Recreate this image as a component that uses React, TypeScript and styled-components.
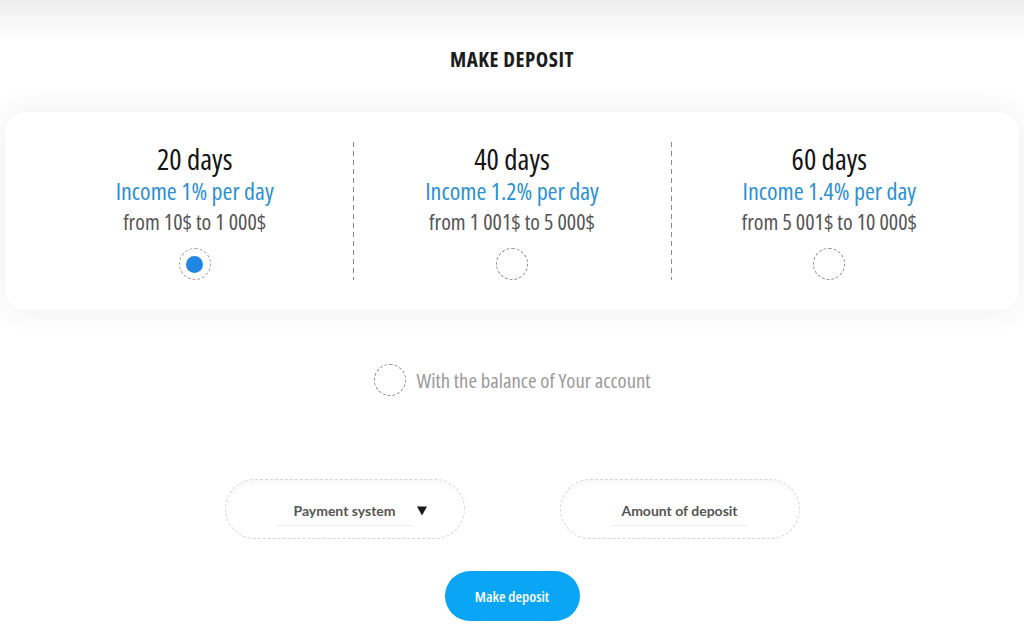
import React, { useState } from "react";
import styled, { createGlobalStyle } from "styled-components";

const Global = createGlobalStyle`
  html, body { margin: 0; padding: 0; background: #ffffff; }
  body { font-family: "Open Sans", "DejaVu Sans Condensed", sans-serif; }
  * { box-sizing: border-box; }
`;

const narrow = `"Open Sans", "DejaVu Sans Condensed", sans-serif`;

const Page = styled.div`
  width: 1024px;
  height: 642px;
  overflow: hidden;
  display: flex;
  flex-direction: column;
  align-items: center;
  background: linear-gradient(#ececec 0px, #f6f6f6 18px, #ffffff 42px);
`;

const Title = styled.h1`
  margin: 48px 0 0;
  height: 22px;
  line-height: 22px;
  font-family: ${narrow};
  font-stretch: 75%;
  font-weight: 700;
  font-size: 21px;
  letter-spacing: 0.5px;
  color: #1d1d1d;
`;

const Card = styled.div`
  margin-top: 42px;
  width: 1014px;
  height: 198px;
  padding: 30px 31px;
  background: #fff;
  border-radius: 20px;
  box-shadow: 0 0 32px rgba(0, 0, 0, 0.075);
  display: grid;
  grid-template-columns: repeat(3, 1fr);
`;

const Plan = styled.div<{ $divider?: boolean }>`
  display: flex;
  flex-direction: column;
  align-items: center;
  background: ${(p) =>
    p.$divider
      ? "linear-gradient(#8a8a8a 55%, transparent 0) left top / 1px 9px repeat-y"
      : "none"};
`;

const Days = styled.div`
  font-family: ${narrow};
  font-stretch: 75%;
  font-weight: 500;
  font-size: 29px;
  line-height: 33px;
  color: #151515;
`;

const Income = styled.div`
  font-family: ${narrow};
  font-stretch: 75%;
  font-weight: 500;
  font-size: 24px;
  line-height: 32px;
  color: #2b90d5;
`;

const Range = styled.div`
  font-family: ${narrow};
  font-stretch: 75%;
  font-size: 22px;
  line-height: 29px;
  color: #555;
`;

const Radio = styled.button<{ $checked?: boolean }>`
  width: 32px;
  height: 32px;
  padding: 0;
  border-radius: 50%;
  border: 1px dashed ${(p) => (p.$checked ? "#b79a9a" : "#8f8f8f")};
  background: #fff;
  display: flex;
  align-items: center;
  justify-content: center;
  cursor: pointer;
  flex-shrink: 0;
  &::after {
    content: "";
    width: 17px;
    height: 17px;
    border-radius: 50%;
    background: ${(p) => (p.$checked ? "#1f86e3" : "transparent")};
  }
`;

const PlanRadio = styled(Radio)`
  margin-top: 12px;
`;

const BalanceRow = styled.label`
  margin-top: 54px;
  display: flex;
  align-items: center;
  gap: 10px;
  cursor: pointer;
  margin-left: 1px;
`;

const BalanceText = styled.span`
  font-family: ${narrow};
  font-stretch: 75%;
  font-weight: 500;
  font-size: 20.7px;
  color: #9a9a9a;
`;

const Fields = styled.div`
  margin-top: 83px;
  display: flex;
  gap: 95px;
`;

const Pill = styled.div`
  width: 240px;
  height: 60px;
  border-radius: 30px;
  border: 1px dashed #d6d6d6;
  box-shadow: inset 0 6px 10px -6px rgba(0, 0, 0, 0.06);
  display: flex;
  align-items: center;
  justify-content: center;
`;

const Field = styled.div`
  position: relative;
  width: 135px;
  height: 30px;
  margin-top: 4px;
  border-bottom: 1px solid #ececec;
  display: flex;
  align-items: center;
  justify-content: center;
  font-family: Lato, "Open Sans", sans-serif;
  font-weight: 700;
  font-size: 14px;
  color: #555;
`;

const Arrow = styled.span`
  position: absolute;
  left: 140px;
  top: 50%;
  transform: translateY(-50%);
  width: 0;
  height: 0;
  border-left: 5px solid transparent;
  border-right: 5px solid transparent;
  border-top: 9px solid #1a1a1a;
`;

const SubmitButton = styled.button`
  margin-top: 32px;
  width: 135px;
  height: 50px;
  border: none;
  border-radius: 25px;
  background: #0aa5f5;
  color: #fff;
  font-family: ${narrow};
  font-stretch: 75%;
  font-weight: 600;
  font-size: 15px;
  cursor: pointer;
`;

const plans = [
  { days: "20 days", income: "Income 1% per day", range: "from 10$ to 1 000$" },
  { days: "40 days", income: "Income 1.2% per day", range: "from 1 001$ to 5 000$" },
  { days: "60 days", income: "Income 1.4% per day", range: "from 5 001$ to 10 000$" },
];

export default function App() {
  const [selected, setSelected] = useState(0);
  const [balance, setBalance] = useState(false);
  return (
    <>
      <Global />
      <Page>
        <Title>MAKE DEPOSIT</Title>
        <Card>
          {plans.map((p, i) => (
            <Plan key={p.days} $divider={i > 0}>
              <Days>{p.days}</Days>
              <Income>{p.income}</Income>
              <Range>{p.range}</Range>
              <PlanRadio
                type="button"
                aria-label={p.days}
                $checked={selected === i}
                onClick={() => setSelected(i)}
              />
            </Plan>
          ))}
        </Card>
        <BalanceRow onClick={() => setBalance(!balance)}>
          <Radio type="button" aria-label="balance" $checked={balance} />
          <BalanceText>With the balance of Your account</BalanceText>
        </BalanceRow>
        <Fields>
          <Pill>
            <Field>
              Payment system
              <Arrow />
            </Field>
          </Pill>
          <Pill>
            <Field>Amount of deposit</Field>
          </Pill>
        </Fields>
        <SubmitButton type="button">Make deposit</SubmitButton>
      </Page>
    </>
  );
}
